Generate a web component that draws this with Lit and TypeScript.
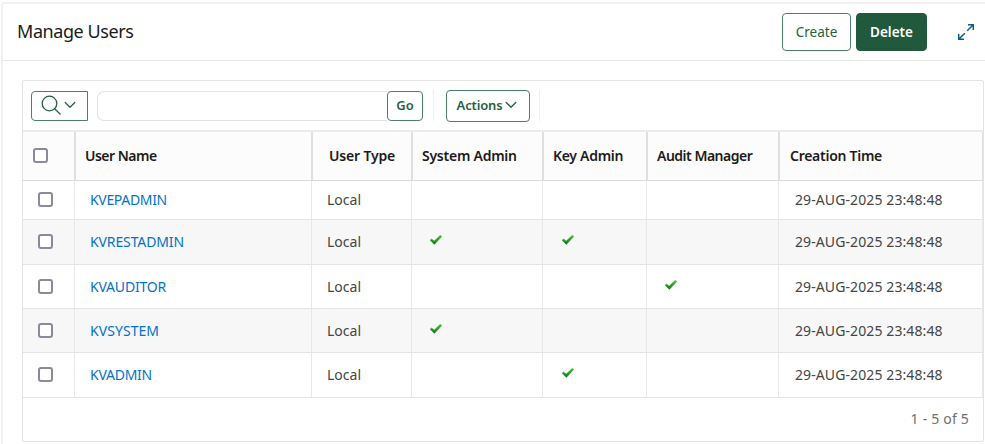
import { LitElement, html, css } from "lit";
import { customElement } from "lit/decorators.js";
import { classMap } from "lit/directives/class-map.js";
import { styleMap } from "lit/directives/style-map.js";

interface Label {
  text: string;
  tracking: number;
}

interface User {
  name: Label;
  system?: boolean;
  key?: boolean;
  audit?: boolean;
}

const USERS: User[] = [
  { name: { text: "KVEPADMIN", tracking: -0.33 } },
  { name: { text: "KVRESTADMIN", tracking: -0.12 }, system: true, key: true },
  { name: { text: "KVAUDITOR", tracking: -0.2 }, audit: true },
  { name: { text: "KVSYSTEM", tracking: 0.06 }, system: true },
  { name: { text: "KVADMIN", tracking: -0.25 }, key: true },
];

const COLUMNS: Label[] = [
  { text: "User Name", tracking: -0.5 },
  { text: "User Type", tracking: -0.17 },
  { text: "System Admin", tracking: -0.25 },
  { text: "Key Admin", tracking: -0.3 },
  { text: "Audit Manager", tracking: -0.5 },
  { text: "Creation Time", tracking: -0.27 },
];

const CREATED = "29-AUG-2025 23:48:48";

const tracked = (l: Label) => styleMap({ letterSpacing: `${l.tracking}px` });

const chevron = html`<svg class="chevron" width="12" height="8" viewBox="0 0 12 8">
  <path d="M1.2 1.5 L6 6.2 L10.8 1.5" fill="none" stroke="currentColor" stroke-width="1.3" stroke-linecap="round" stroke-linejoin="round" />
</svg>`;

const tick = html`<svg class="tick" width="14" height="12" viewBox="0 0 14 12">
  <defs>
    <linearGradient id="g" x1="0" y1="0" x2="0" y2="1">
      <stop offset="0" stop-color="#4fc02c" />
      <stop offset="1" stop-color="#077a22" />
    </linearGradient>
  </defs>
  <path d="M1 6.2 L2.7 4.9 L5.2 7 L11.2 1.2 L12.9 2.4 L5.4 10.4 Z" fill="url(#g)" stroke="url(#g)" stroke-width=".4" stroke-linejoin="round" />
</svg>`;

@customElement("app-root")
export class AppRoot extends LitElement {
  static styles = css`
    :host {
      display: block;
      height: 444px;
      overflow: hidden;
      background: #fff;
      color: #1b1b1a;
      font-family: "Noto Sans", "Open Sans", sans-serif;
      font-size: 14px;
    }
    * {
      box-sizing: border-box;
    }
    .region {
      height: 444px;
      margin: 2px 0 0 1px;
      border: 2px solid #f1f1f1;
      border-width: 2px 0 0 2px;
      border-radius: 3px 0 0 0;
    }
    .header {
      display: flex;
      align-items: center;
      height: 57px;
      padding: 0 10px 0 14px;
      border-bottom: 1px solid #e8e8e8;
    }
    .title {
      flex: 1;
      margin: 0;
      padding-bottom: 2px;
      font-size: 18px;
      font-weight: 400;
      letter-spacing: -0.43px;
      line-height: 24px;
    }
    button {
      display: inline-flex;
      align-items: center;
      justify-content: center;
      padding: 0 0 1px;
      font: inherit;
      white-space: nowrap;
      color: #265f42;
      background: #fff;
      border: 1px solid #4f8067;
      border-radius: 4px;
    }
    .create {
      width: 69px;
      height: 38px;
      font-size: 13.5px;
    }
    .delete {
      width: 71px;
      height: 38px;
      margin-left: 5px;
      font-size: 13.5px;
      font-weight: 600;
      color: #fff;
      background: #21593d;
      border-color: #21593d;
    }
    .expand {
      margin-left: 30px;
      display: block;
      color: #145c85;
    }
    .report {
      width: 962px;
      height: 362px;
      margin: 19px 0 0 19px;
      border: 1px solid #e4e4e4;
      border-radius: 2px;
    }
    .toolbar {
      display: flex;
      align-items: center;
      height: 49px;
      padding: 0 8px;
    }
    .finder {
      width: 57px;
      height: 30px;
      gap: 3px;
      padding: 0 3px 1px 0;
      border-radius: 4px 0 0 4px;
    }
    .field {
      width: 290px;
      height: 30px;
      margin-left: 9px;
      padding: 0 8px;
      border: 1px solid #e2e2e2;
      border-right: 0;
      border-radius: 7px 0 0 7px;
      outline: 0;
      font: inherit;
    }
    .go {
      width: 36px;
      height: 30px;
      font-size: 13px;
      font-weight: 600;
    }
    .rule {
      width: 1px;
      height: 31px;
      background: #efefef;
    }
    .rule.first {
      margin: 0 12px 0 10px;
    }
    .actions {
      width: 84px;
      height: 32px;
      gap: 3px;
      margin-right: 9px;
      padding-right: 2px;
      font-size: 13px;
      font-weight: 600;
      letter-spacing: -0.15px;
    }
    .row {
      display: grid;
      grid-template-columns: 52px 237px 100px 131px 104px 132px 204px;
      height: 44px;
    }
    .row.short {
      height: 39px;
    }
    .row.last {
      height: 45px;
    }
    .row.striped {
      background: #f7f7f7;
    }
    .row.head {
      grid-template-columns: 53px 237px 100px 131px 104px 132px 203px;
      height: 51px;
      background: #fcfcfc;
      border-top: 2px solid #ebebeb;
      font-weight: 600;
    }
    .cell {
      display: flex;
      align-items: center;
      padding: 0 0 1px 15px;
      border-right: 1px solid #e8e8e8;
      border-bottom: 1px solid #e4e4e4;
      color: #454545;
    }
    .cell.key {
      padding-left: 16px;
    }
    .cell.time {
      padding-left: 16px;
      letter-spacing: 0.1px;
    }
    .head .cell {
      padding: 0 0 2px 9px;
      color: #1b1b1a;
      border-right: 2px solid #dfdfdf;
      border-bottom-color: #dadada;
    }
    .head .cell:nth-child(3) {
      padding-left: 16px;
    }
    .head .cell:first-child {
      padding-left: 10px;
    }
    .head .cell:last-child {
      padding-left: 10px;
      border-right-width: 1px;
    }
    .box {
      width: 15px;
      height: 15px;
      margin: 0;
      appearance: none;
      background: #fff;
      border: 2px solid #8c899a;
      border-radius: 3px;
    }
    .name {
      color: #0572ca;
      text-decoration: none;
    }
    .tick {
      margin: -3px 0 0 2px;
    }
    .pager {
      display: flex;
      align-items: center;
      justify-content: flex-end;
      height: 43px;
      padding: 0 14px 2px 0;
      color: #6f6f6f;
      letter-spacing: 0.2px;
    }
  `;

  private renderUser(u: User, i: number) {
    const classes = { row: true, striped: i % 2 === 1, short: i === 0, last: i === 1 || i === USERS.length - 1 };
    return html`<div class=${classMap(classes)}>
      <div class="cell"><input class="box" type="checkbox" /></div>
      <div class="cell"><a class="name" style=${tracked(u.name)}>${u.name.text}</a></div>
      <div class="cell">Local</div>
      <div class="cell">${u.system ? tick : ""}</div>
      <div class="cell key">${u.key ? tick : ""}</div>
      <div class="cell">${u.audit ? tick : ""}</div>
      <div class="cell time">${CREATED}</div>
    </div>`;
  }

  render() {
    return html`<div class="region">
      <div class="header">
        <h1 class="title">Manage Users</h1>
        <button class="create">Create</button>
        <button class="delete">Delete</button>
        <svg class="expand" width="18" height="18" viewBox="0 0 18 18" fill="none" stroke="currentColor" stroke-width="1.5">
          <path d="M11 1.7 H16.3 V7 M16 2 L10.2 7.8 M7 16.3 H1.7 V11 M2 16 L7.8 10.2" />
        </svg>
      </div>
      <div class="report">
        <div class="toolbar">
          <button class="finder">
            <svg width="20" height="20" viewBox="0 0 20 20" fill="none" stroke="currentColor" stroke-width="1.3">
              <circle cx="8.5" cy="8.5" r="7.3" />
              <path d="M13.7 13.7 L19 19" stroke-linecap="round" />
            </svg>
            ${chevron}
          </button>
          <input class="field" type="text" />
          <button class="go">Go</button>
          <span class="rule first"></span>
          <button class="actions">Actions ${chevron}</button>
          <span class="rule"></span>
        </div>
        <div class="row head">
          <div class="cell"><input class="box" type="checkbox" /></div>
          ${COLUMNS.map((c) => html`<div class="cell" style=${tracked(c)}>${c.text}</div>`)}
        </div>
        ${USERS.map((u, i) => this.renderUser(u, i))}
        <div class="pager">1 - 5 of 5</div>
      </div>
    </div>`;
  }
}
